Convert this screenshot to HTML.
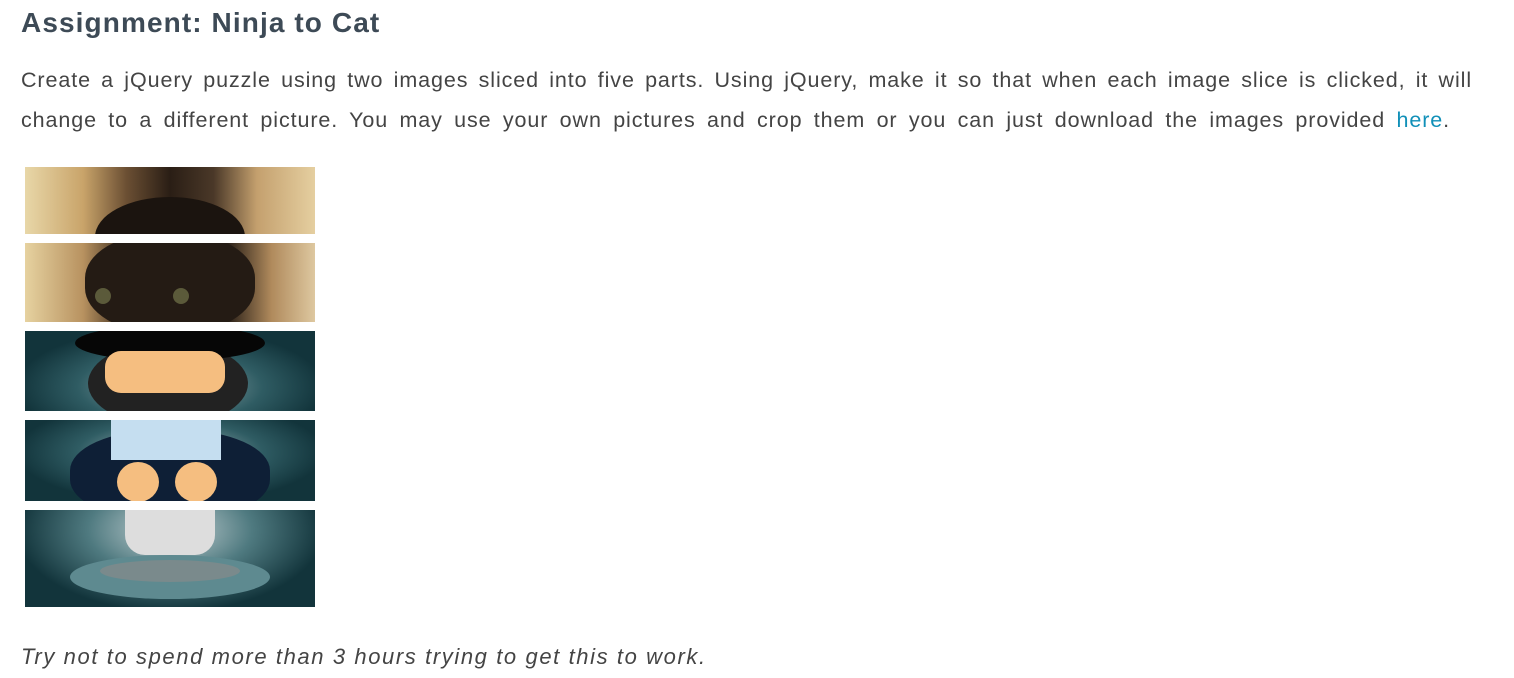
<!DOCTYPE html>
<html><head><meta charset="utf-8"><style>
body{margin:0;background:#fff;width:1514px;height:678px;overflow:hidden;font-family:"Liberation Sans",sans-serif;position:relative}
h1{position:absolute;left:21px;top:7px;margin:0;font-size:28px;font-weight:bold;color:#3d4a56;letter-spacing:1.1px}
.l{position:absolute;left:21px;font-size:21.5px;color:#444;text-align:justify;text-align-last:justify;white-space:nowrap;line-height:26px;letter-spacing:0.9px}
a{color:#1190b8;text-decoration:none}
.s{position:absolute;left:25px;width:290px;overflow:hidden}
.it{position:absolute;left:21px;top:644px;font-size:22px;font-style:italic;color:#444;letter-spacing:1.6px}
</style></head><body>
<h1>Assignment: Ninja to Cat</h1>
<div class="l" style="top:67px;width:1451px">Create a jQuery puzzle using two images sliced into five parts. Using jQuery, make it so that when each image slice is clicked, it will</div>
<div class="l" style="top:107px;width:1429px">change to a different picture. You may use your own pictures and crop them or you can just download the images provided <a>here</a>.</div>

<div class="s" style="top:167px;height:67px;background:linear-gradient(90deg,#e8d7a8,#c9a46a 20%,#6b4f33 35%,#2a1e15 50%,#4a3828 65%,#c4a06e 80%,#e5cfa0)">
<div style="position:absolute;left:70px;top:30px;width:150px;height:80px;border-radius:50%;background:#1b140f"></div>
</div>
<div class="s" style="top:243px;height:79px;background:linear-gradient(90deg,#e6d2a0,#b89260 20%,#3a2a1c 35%,#1e1610 50%,#2a2018 70%,#b08a5c 85%,#dec8a0)">
<div style="position:absolute;left:60px;top:-10px;width:170px;height:100px;border-radius:45%;background:#241b14"></div>
<div style="position:absolute;left:70px;top:45px;width:16px;height:16px;border-radius:50%;background:#5b5a3a"></div>
<div style="position:absolute;left:148px;top:45px;width:16px;height:16px;border-radius:50%;background:#5b5a3a"></div>
</div>
<div class="s" style="top:331px;height:80px;background:radial-gradient(ellipse at 50% 70%,#9fb5b8,#2f5c63 45%,#12343b 75%)">
<div style="position:absolute;left:63px;top:10px;width:160px;height:85px;border-radius:50%;background:#222"></div>
<div style="position:absolute;left:50px;top:-6px;width:190px;height:36px;border-radius:50%;background:#060606"></div>
<div style="position:absolute;left:80px;top:20px;width:120px;height:42px;border-radius:16px;background:#f5be80"></div>
</div>
<div class="s" style="top:420px;height:81px;background:radial-gradient(ellipse at 50% 40%,#a8bcc0,#2f5c63 45%,#12343b 75%)">
<div style="position:absolute;left:45px;top:10px;width:200px;height:90px;border-radius:45%;background:#0e1f36"></div>
<div style="position:absolute;left:86px;top:0;width:110px;height:40px;background:#c5def0"></div>
<div style="position:absolute;left:92px;top:42px;width:42px;height:40px;border-radius:50%;background:#f5be80"></div>
<div style="position:absolute;left:150px;top:42px;width:42px;height:40px;border-radius:50%;background:#f5be80"></div>
</div>
<div class="s" style="top:510px;height:97px;background:radial-gradient(ellipse at 50% 20%,#c8d4d6,#4f7a80 40%,#12343b 75%)">
<div style="position:absolute;left:100px;top:0;width:90px;height:45px;background:#ddd;border-radius:0 0 20px 20px"></div>
<div style="position:absolute;left:45px;top:45px;width:200px;height:44px;border-radius:50%;background:#5e8a90"></div>
<div style="position:absolute;left:75px;top:50px;width:140px;height:22px;border-radius:50%;background:#7a8a8c"></div>
</div>

<div class="it">Try not to spend more than 3 hours trying to get this to work.</div>
</body></html>
